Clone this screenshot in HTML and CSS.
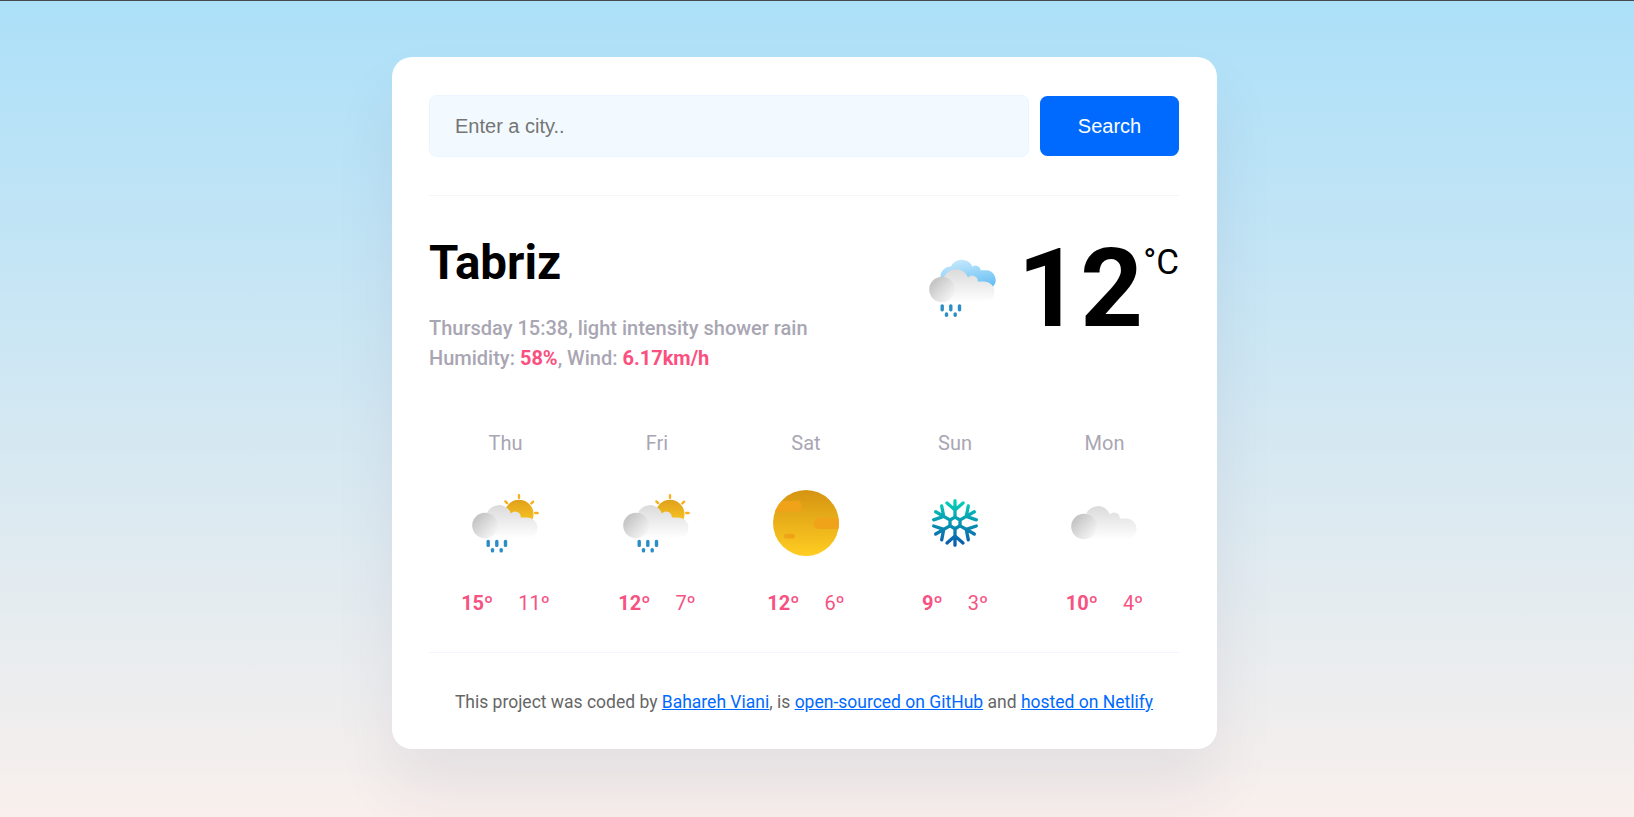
FILE: index.html
```html
<!DOCTYPE html>
<html lang="en">
<head>
<meta charset="utf-8">
<title>Weather</title>
<link rel="stylesheet" href="styles.css">
</head>
<body>
<svg class="defs" width="0" height="0" aria-hidden="true">
  <defs>
    <linearGradient id="cloudBody" gradientUnits="userSpaceOnUse" x1="0" y1="21" x2="0" y2="55.5"><stop offset="0" stop-color="#d9d9d9"/><stop offset="1" stop-color="#ffffff"/></linearGradient>
    <linearGradient id="cloudPuff" gradientUnits="userSpaceOnUse" x1="11" y1="35" x2="29" y2="52"><stop offset="0" stop-color="#c6c6c6"/><stop offset="1" stop-color="#f6f6f6"/></linearGradient>
    <linearGradient id="sunFill" x1="0" y1="0" x2="0" y2="1"><stop offset="0" stop-color="#d59412"/><stop offset="1" stop-color="#ffcd22"/></linearGradient>
    <linearGradient id="sunSmall" x1="0" y1="0" x2="0" y2="1"><stop offset="0" stop-color="#e0a01c"/><stop offset="1" stop-color="#ffd022"/></linearGradient>
    <linearGradient id="blueCloud" gradientUnits="userSpaceOnUse" x1="36" y1="12" x2="42" y2="43"><stop offset="0" stop-color="#c8e9fd"/><stop offset="1" stop-color="#68c0f4"/></linearGradient>
    <linearGradient id="snowFill" gradientUnits="userSpaceOnUse" x1="0" y1="-24" x2="0" y2="24"><stop offset="0" stop-color="#06d6b8"/><stop offset="1" stop-color="#0a55ab"/></linearGradient>
    <clipPath id="sunClip"><circle cx="40" cy="40" r="33"/></clipPath>
    <g id="cloud">
      <path fill="url(#cloudBody)" d="M19 55.5V42.5L20.4 31.5A13 13 0 0 1 45 30.4A5.7 5.7 0 0 1 54.8 34.4H61A10.5 10.5 0 0 1 61 55.5Z"/>
      <circle cx="19" cy="42.5" r="12.8" fill="url(#cloudPuff)"/>
    </g>
    <g id="drops" fill="#2c8ec6">
      <rect x="20.5" y="56.8" width="3.4" height="7.2" rx="1.6"/>
      <rect x="29.1" y="56.8" width="3.4" height="7.2" rx="1.6"/>
      <rect x="37.8" y="56.8" width="3.4" height="7.2" rx="1.6"/>
      <rect x="24.8" y="64.9" width="3.4" height="4.6" rx="1.6"/>
      <rect x="33.5" y="64.9" width="3.4" height="4.6" rx="1.6"/>
    </g>
    <g id="sunShower">
      <circle cx="53" cy="31.2" r="14.5" fill="url(#sunSmall)"/>
      <path d="M53 12.3v2.4M69.2 30h2.4M39.4 18.4l1.7 1.7M67.1 18.7l-1.7 1.7" stroke="#f9b01e" stroke-width="2.4" stroke-linecap="round"/>
      <use href="#cloud"/>
      <use href="#drops"/>
    </g>
    <path id="snowArm" d="M0 -5.5V-22.3M-8 -20L0 -13L8 -20"/>
  </defs>
</svg>
<main class="card">
  <form class="search">
    <input class="search-input" type="search" placeholder="Enter a city..">
    <button class="search-button" type="button">Search</button>
  </form>
  <section class="current">
    <div class="place">
      <h1 class="city">Tabriz</h1>
      <p class="details">Thursday 15:38, light intensity shower rain<br>Humidity: <strong>58%</strong>, Wind: <strong>6.17km/h</strong></p>
    </div>
    <div class="temperature">
      <svg class="icon icon-current" viewBox="0 0 80 80">
        <path fill="url(#blueCloud)" d="M17.5 30A9.8 9.8 0 0 1 28 19.6A11.8 11.8 0 0 1 49.4 19.8A5 5 0 0 1 57.7 23.2H62.8A9.7 9.7 0 0 1 70 39.5L60 45H20Z"/>
        <use href="#cloud"/>
        <use href="#drops" x="-3" y="0.4"/>
      </svg>
      <span class="value">12</span><span class="unit">°C</span>
    </div>
  </section>
  <section class="forecast">
    <div class="day"><div class="name">Thu</div><svg class="icon" viewBox="0 0 80 80"><use href="#sunShower"/></svg><div class="range"><strong>15º</strong><span>11º</span></div></div>
    <div class="day"><div class="name">Fri</div><svg class="icon" viewBox="0 0 80 80"><use href="#sunShower"/></svg><div class="range"><strong>12º</strong><span>7º</span></div></div>
    <div class="day"><div class="name">Sat</div><svg class="icon" viewBox="0 0 80 80"><circle cx="40" cy="40" r="33" fill="url(#sunFill)"/><g clip-path="url(#sunClip)" fill="#f0a218"><rect x="0" y="18" width="35.5" height="10.8" rx="4.5"/><rect x="47.7" y="34.8" width="34" height="11.2" rx="5"/><rect x="18" y="50.7" width="11" height="4.8" rx="2"/></g></svg><div class="range"><strong>12º</strong><span>6º</span></div></div>
    <div class="day"><div class="name">Sun</div><svg class="icon" viewBox="0 0 80 80"><mask id="snowMask" maskUnits="userSpaceOnUse" x="-30" y="-30" width="60" height="60"><g fill="none" stroke="#fff" stroke-width="3.3" stroke-linecap="round" stroke-linejoin="round"><path d="M0 -5.8L5 -2.9V2.9L0 5.8L-5 2.9V-2.9Z"/><use href="#snowArm"/><use href="#snowArm" transform="rotate(60)"/><use href="#snowArm" transform="rotate(120)"/><use href="#snowArm" transform="rotate(180)"/><use href="#snowArm" transform="rotate(240)"/><use href="#snowArm" transform="rotate(300)"/></g></mask><g transform="translate(40 39.9)"><rect x="-30" y="-30" width="60" height="60" fill="url(#snowFill)" mask="url(#snowMask)"/></g></svg><div class="range"><strong>9º</strong><span>3º</span></div></div>
    <div class="day"><div class="name">Mon</div><svg class="icon" viewBox="0 0 80 80"><use href="#cloud" y="1"/></svg><div class="range"><strong>10º</strong><span>4º</span></div></div>
  </section>
  <footer class="footer">This project was coded by <a href="#">Bahareh Viani</a>, is <a href="#">open-sourced on GitHub</a> and <a href="#">hosted on Netlify</a></footer>
</main>
</body>
</html>
```
FILE: styles.css
```css
* { box-sizing: border-box; }
html { height: 817px; overflow: hidden; }
body {
  margin: 0;
  height: 817px;
  padding: 56px 25px 0 0;
  overflow: hidden;
  border-top: 1px solid #47494f;
  background: linear-gradient(to top, #fff1eb 0%, #ace0f9 100%) 0 0 / 100% 888px no-repeat;
  font-family: Roboto, "Liberation Sans", sans-serif;
  font-size: 20px;
}
.defs { position: absolute; }
.card {
  width: 825px;
  height: 692px;
  margin: 0 auto;
  padding: 38px 38px 0 37px;
  border-radius: 20px;
  background: #fff;
  box-shadow: 0 37.5px 62.5px rgba(65, 50, 100, 0.08);
}
.search {
  display: flex;
  align-items: center;
  gap: 11px;
  height: 101px;
  padding-bottom: 38px;
  border-bottom: 1px solid #f6f6f8;
}
.search-input {
  width: 600px;
  height: 62px;
  padding: 0 25px;
  border: 1px solid #ebf5ff;
  border-radius: 7.5px;
  background: #f2faff;
  font: 20px "Liberation Sans", Arial, sans-serif;
  appearance: none;
}
.search-input::placeholder { color: #757575; }
.search-button {
  width: 139px;
  height: 60px;
  padding: 0;
  border: 0;
  border-radius: 7.5px;
  background: #006aff;
  color: #fff;
  font: 20px "Liberation Sans", Arial, sans-serif;
}
.current {
  display: flex;
  justify-content: space-between;
  height: 232px;
  padding-top: 38px;
}
.city {
  margin: 1px 0 0;
  font-size: 47.5px;
  line-height: 57px;
  font-weight: 700;
}
.details {
  margin: 21px 0 0;
  font-weight: 500;
  line-height: 30px;
  color: #a9a6b3;
}
.details strong { font-weight: 700; color: #fb4f80; }
.temperature { display: flex; align-items: flex-start; }
.icon { display: block; width: 80px; height: 80px; }
.icon-current { margin: 13px 14.5px 0 0; }
.value { margin-top: 2px; font-size: 109.5px; line-height: 106px; font-weight: 700; }
.unit { margin-top: 8px; font-size: 35px; line-height: 42px; }
.forecast {
  display: grid;
  grid-template-columns: 153fr 150fr 148fr 150fr 149fr;
  height: 225px;
  border-bottom: 1px solid #f5f5ff;
}
.day { display: flex; flex-direction: column; align-items: center; }
.name { height: 55px; line-height: 30px; color: #a9a6b3; }
.range {
  display: flex;
  gap: 25px;
  margin-top: 25px;
  line-height: 30px;
  color: #f65282;
}
.footer {
  padding-top: 36px;
  font-size: 17.5px;
  line-height: 26px;
  text-align: center;
  color: #666;
}
.footer a { color: #006aff; }
```
